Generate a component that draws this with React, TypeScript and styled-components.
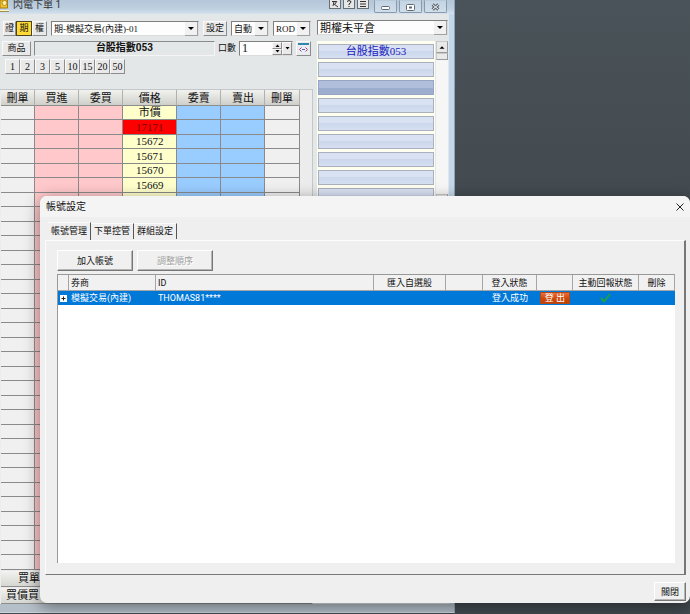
import React from "react";
import styled, { createGlobalStyle, css } from "styled-components";

const ming = `"Liberation Serif", "Noto Sans CJK TC", serif`;
const sans = `Roboto, "Noto Sans CJK TC", sans-serif`;

const Global = createGlobalStyle`
  *, *::before, *::after { box-sizing: border-box; }
  body { margin: 0; background: #434b50; }
  button, input, select { font: inherit; color: inherit; margin: 0; padding: 0; border-radius: 0; }
  table { border-collapse: collapse; }
`;

const Desktop = styled.main`
  position: relative;
  display: grid;
  grid-template-columns: minmax(0, 455fr) minmax(0, 235fr);
  align-items: start;
  min-height: 100vh;
  overflow: hidden;
  background: linear-gradient(#4a5359, #434b50 180px);
  font-family: ${ming};
  font-size: 10px;
  line-height: 12px;
  color: #111;
`;

/* ---------- order window ---------- */

const OrderWindow = styled.section`
  display: flex;
  flex-direction: column;
  background: #c3d8ea;
  border-bottom: 1px solid #c9d2da;
  border-right: 1px solid #8fa3b4;
`;

const TitleBar = styled.header`
  display: flex;
  align-items: flex-start;
  height: 14px;
  padding-right: 7px;
  background: linear-gradient(#b4c6d8, #bfd0e0 9px, #d5e2ee);
`;

const WindowTitle = styled.h1`
  flex: 1;
  margin: 0 0 0 4px;
  color: #333;
  font-family: ${sans};
  font-size: 10px;
  font-weight: 400;
  line-height: 9px;
  white-space: nowrap;
`;

const ToolButtons = styled.div`
  display: flex;
  gap: 2px;
  margin-right: 5px;
`;

const ToolButton = styled.button`
  display: grid;
  place-items: center;
  width: 12px;
  height: 9px;
  background: #e7e7e7;
  border: 1px solid #6a6f74;
  border-top: 0;
`;

const CaptionButtons = styled.div`
  display: flex;
  gap: 2px;
`;

const CaptionButton = styled.button`
  display: grid;
  place-items: center;
  width: 23px;
  height: 13px;
  background: linear-gradient(#c3d4e4, #d0deea);
  border: 1px solid #8899aa;
  border-top-color: #b9cad9;
  border-radius: 0 0 2px 2px;
`;

const WindowBody = styled.div`
  display: grid;
  grid-template-columns: minmax(0, 313fr) minmax(0, 131fr);
  gap: 4px;
  margin-right: 5px;
  padding: 6px 1px 0 0;
  background: #e4e7e8;
`;

const FrameFoot = styled.div`
  height: 8px;
  background: #b4bfc9;
`;

const LeftPane = styled.div`
  display: flex;
  flex-direction: column;
`;

const Row = styled.div<{ $gap: number; $left: number; $top: number }>`
  display: flex;
  align-items: stretch;
  height: 15px;
  gap: ${(p) => p.$gap}px;
  margin-top: ${(p) => p.$top}px;
  padding: 0 2px 0 ${(p) => p.$left}px;
  font-size: 9px;
`;

const raised = css`
  background: #e9e9e9;
  border: 1px solid;
  border-color: #fafafa #8c8c8c #8c8c8c #fafafa;
`;

const PushButton = styled.button<{ $w: number; $on?: boolean; $size?: number }>`
  ${raised}
  flex: none;
  width: ${(p) => p.$w}px;
  font-size: ${(p) => p.$size ?? 9}px;
  line-height: 11px;
  text-align: center;
  white-space: nowrap;
  ${(p) =>
    p.$on &&
    css`
      background: #ffd936;
      border-color: #4d4520;
    `}
`;

const Segments = styled.div`
  display: flex;
`;

const Drop = styled.label<{ $w?: number; $size?: number }>`
  display: grid;
  flex: ${(p) => (p.$w ? "none" : "1")};
  width: ${(p) => (p.$w ? `${p.$w}px` : "auto")};
  min-width: 0;
  height: 15px;
  align-items: center;
  background: #fdfdfd;
  border: 1px solid;
  border-color: #7f7f7f #dcdcdc #dcdcdc #7f7f7f;
  font-size: ${(p) => p.$size ?? 9}px;

  select {
    grid-area: 1 / 1;
    width: 100%;
    height: 13px;
    padding-left: 2px;
    appearance: none;
    background: transparent;
    border: 0;
    line-height: 13px;
  }
  svg {
    grid-area: 1 / 1;
    justify-self: end;
    box-sizing: content-box;
    padding: 3px 0;
    background: #f1f1f1;
    border-right: 1px solid #a0a0a0;
    border-bottom: 1px solid #a0a0a0;
    pointer-events: none;
  }
`;

const ProductName = styled.output`
  flex: 1;
  min-width: 0;
  border: 1px solid;
  border-color: #8a8a8a #f5f5f5 #f5f5f5 #8a8a8a;
  font-family: ${sans};
  font-size: 10px;
  font-weight: 700;
  line-height: 12px;
  text-align: center;
  white-space: nowrap;
`;

const FieldLabel = styled.label`
  line-height: 15px;
  white-space: nowrap;
`;

const Quantity = styled.div`
  display: grid;
  grid-template-columns: 1fr 10px 10px;
  grid-template-rows: 1fr 1fr;
  width: 54px;
  background: #fdfdfd;
  border: 1px solid;
  border-color: #7f7f7f #dcdcdc #dcdcdc #7f7f7f;

  input {
    grid-row: 1 / 3;
    width: 100%;
    min-width: 0;
    padding-left: 2px;
    background: transparent;
    border: 0;
    font-size: 12px;
    line-height: 12px;
  }
`;

const TinyButton = styled.button<{ $tall?: boolean }>`
  ${raised}
  display: grid;
  place-items: center;
  grid-column: ${(p) => (p.$tall ? 3 : 2)};
  grid-row: ${(p) => (p.$tall ? "1 / 3" : "auto")};
  min-height: 0;
`;

const IconButton = styled.button`
  ${raised}
  display: grid;
  place-items: center;
  width: 15px;
`;

const LadderFrame = styled.div`
  margin-top: 15px;
  padding-left: 1px;
  border-top: 1px solid #c3c7c9;
  border-right: 1px solid #c3c7c9;
  background: #ececec;
`;

const Ladder = styled.table`
  width: 96%;
  table-layout: fixed;
  border-collapse: separate;
  border-spacing: 0;
  font-size: 11px;
  line-height: 13px;
  text-align: center;

  th, td { padding: 0; white-space: nowrap; overflow: hidden; }
  th {
    height: 16px;
    font-weight: 400;
    background: linear-gradient(#f2f2f0, #cfcfca);
    border-right: 1px solid #b0b0ac;
    border-bottom: 1px solid #8d8d8d;
    line-height: 14px;
  }
  tbody tr { height: 14px; }
  tbody tr:nth-child(even) { height: 15px; }
`;

type Tone = "plain" | "buy" | "price" | "sell" | "hot";
const tones: Record<Tone, string> = {
  plain: "#f0f0f0",
  buy: "#ffc8ca",
  price: "#ffffcc",
  sell: "#99ccff",
  hot: "#ff0000",
};

const LadderCell = styled.td<{ $tone: Tone }>`
  background: ${(p) => tones[p.$tone]};
  color: ${(p) => (p.$tone === "hot" ? "#7a0000" : "#111")};
  border-right: 1px solid #8a8a8a;
  border-bottom: 1px solid #8a8a8a;
`;

const Summary = styled.div<{ $left: number }>`
  height: 16px;
  margin-top: 1px;
  padding-left: ${(p) => p.$left}px;
  background: linear-gradient(#f2f2f0, #d6d6d2);
  border-bottom: 1px solid #8d8d8d;
  font-size: 11px;
  line-height: 14px;
`;

const RightPane = styled.div`
  display: grid;
  grid-template-columns: minmax(0, 1fr);
  align-content: start;
  gap: 6px;
`;

const PositionArea = styled.div`
  display: grid;
  grid-template-columns: minmax(0, 1fr) 12px;
  gap: 1px;
`;

const PositionList = styled.ul`
  display: grid;
  gap: 3px;
  margin: 0;
  padding: 3px 1px;
  list-style: none;
  background: #fffff0;
`;

const Position = styled.li<{ $on?: boolean }>`
  height: 15px;
  border: 1px solid ${(p) => (p.$on ? "#98a4c4" : "#aab0bd")};
  background: ${(p) =>
    p.$on
      ? "linear-gradient(#b0bedb 50%, #9dadd0 50%)"
      : "linear-gradient(#d9e2f3, #d9e2f3 45%, #ccd7ec 50%, #d6dff1)"};
  color: #1a1ac0;
  font-size: 11px;
  line-height: 13px;
  text-align: center;
`;

const ScrollBar = styled.div`
  display: grid;
  grid-template-rows: 12px 7px 1fr 12px;
  background: #f6f6f6;
`;

const ScrollPart = styled.button`
  ${raised}
  border-color: #c8c8c8 #9a9a9a #9a9a9a #c8c8c8;
  display: grid;
  place-items: center;
`;

/* ---------- account dialog ---------- */

const Dialog = styled.section`
  position: absolute;
  top: 196px;
  right: 0;
  bottom: 11px;
  left: 40px;
  display: flex;
  flex-direction: column;
  background: #efefef;
  border-radius: 7px;
  box-shadow: 0 4px 16px rgba(0, 0, 0, 0.45);
  font-family: ${sans};
  font-size: 9px;
`;

const DialogTitle = styled.header`
  display: flex;
  align-items: center;
  justify-content: space-between;
  height: 21px;
  padding: 0 6px;
  background: #f4f4f4;
  border-radius: 7px 7px 0 0;

  h2 { margin: 0; font-size: 10px; font-weight: 400; line-height: 14px; }
`;

const BareButton = styled.button`
  display: grid;
  place-items: center;
  background: none;
  border: 0;
`;

const TreeButton = styled(BareButton)`
  margin: 0 auto;
`;

const Tabs = styled.div`
  display: flex;
  align-items: flex-end;
  height: 23px;
  padding-left: 8px;
`;

const Tab = styled.button<{ $active?: boolean }>`
  height: ${(p) => (p.$active ? 18 : 16)}px;
  padding: 0 3px ${(p) => (p.$active ? 2 : 1)}px;
  margin-bottom: ${(p) => (p.$active ? 0 : 1)}px;
  background: none;
  border: 0;
  border-top: 1px solid #fbfbfb;
  border-right: 1px solid #555;
  line-height: 12px;
  white-space: nowrap;
`;

const TabPanel = styled.div`
  display: flex;
  flex: 1;
  flex-direction: column;
  min-height: 0;
  margin: 0 4px 0 5px;
  padding: 9px 9px 11px 11px;
  border: 1px solid;
  border-color: #fcfcfc #777 #777 #fcfcfc;
  border-right-width: 2px;
`;

const Actions = styled.div`
  display: flex;
  gap: 4px;
`;

const ActionButton = styled.button<{ $w: number }>`
  width: ${(p) => p.$w}px;
  height: ${(p) => (p.$w > 50 ? 21 : 19)}px;
  background: #f0f0f0;
  border: 1px solid;
  border-color: #fff #777 #777 #fff;
  box-shadow: inset -1px -1px #b5b5b5;
  line-height: 12px;

  &:disabled { color: #a0a0a0; text-shadow: 1px 1px #fff; }
`;

const GridArea = styled.div`
  flex: 1;
  margin-top: 3px;
  min-height: 0;
  background: #fff;
  border-left: 1px solid #999;
  border-top: 1px solid #999;
`;

const Accounts = styled.table`
  width: 100%;
  table-layout: fixed;
  border-collapse: separate;
  border-spacing: 0;
  line-height: 12px;
  text-align: center;

  th, td { padding: 0; white-space: nowrap; }
  th {
    height: 16px;
    background: #f1f1f1;
    border-right: 1px solid #a5a5a5;
    border-bottom: 1px solid #a5a5a5;
    font-weight: 400;
  }
  td { height: 14px; background: #0078d7; color: #fff; }
`;

const HeadCell = styled.th<{ $left?: boolean }>`
  && { padding-left: ${(p) => (p.$left ? 2 : 0)}px; }
  text-align: ${(p) => (p.$left ? "left" : "center")};
`;

const BodyCell = styled.td<{ $left?: boolean }>`
  && { padding-left: ${(p) => (p.$left ? 2 : 0)}px; }
  text-align: ${(p) => (p.$left ? "left" : "center")};

  svg { display: block; margin: 0 auto; }
`;

const Logout = styled.button`
  display: block;
  width: 30px;
  height: 12px;
  margin: 0 auto;
  background: linear-gradient(#e8703a, #cf4a0c 50%, #c23f04);
  border: 1px solid #b04a1c;
  color: #fff;
  line-height: 10px;
  white-space: nowrap;
`;

const DialogFoot = styled.footer`
  display: flex;
  justify-content: flex-end;
  padding: 7px 4px 2px;
`;

/* ---------- drawings ---------- */

const Arrow = ({ w = 12, up = false, s = 5 }: { w?: number; up?: boolean; s?: number }) => (
  <svg width={w} height={s > 3 ? 7 : 3} viewBox={s > 3 ? "0 0 12 7" : "0 0 5 3"} aria-hidden="true">
    {s > 3 ? (
      <path d={up ? "M3 5h6L6 2z" : "M3 2h6L6 5z"} fill="#000" />
    ) : (
      <path d={up ? "M.5 3h4L2.500 .5z" : "M.5 0h4L2.500 2.500z"} fill="#000" />
    )}
  </svg>
);

const AppIcon = () => (
  <svg width="9" height="12" viewBox="0 0 9 12" aria-hidden="true">
    <path d="M0 0h7.500v8H0z" fill="#f2c230" stroke="#a57c10" />
    <circle cx="4.500" cy="3" r="2.500" fill="#fff1a8" stroke="#b58a18" />
    <path d="M0 10.500h9" stroke="#fff3c0" />
    <path d="M0 11.500h9" stroke="#a08d50" />
  </svg>
);

const Dropdown = ({ label, value, w, size }: { label: string; value: string; w?: number; size?: number }) => (
  <Drop $w={w} $size={size}>
    <select aria-label={label} defaultValue={value}>
      <option>{value}</option>
    </select>
    <Arrow />
  </Drop>
);

const ladderTones: Tone[] = ["plain", "buy", "buy", "price", "sell", "sell", "plain"];
const ladderHeads = ["刪單", "買進", "委買", "價格", "委賣", "賣出", "刪單"];
const ladderWidths = [34, 44, 44, 54, 44, 44, 34];
const prices = ["市價", "17171", "15672", "15671", "15670", "15669", "15668"];
const ladderRows = Array.from({ length: 32 }, (_, i) => prices[i] ?? "");

const accountHeads = ["", "券商", "ID", "匯入自選股", "", "登入狀態", "", "主動回報狀態", "刪除"];
const accountWidths = [11, 87, 218, 72, 37, 54, 36, 66, 36];

export default function App() {
  return (
    <>
      <Global />
      <Desktop lang="zh-Hant">
        <OrderWindow>
          <TitleBar>
            <AppIcon />
            <WindowTitle>閃電下單 1</WindowTitle>
            <ToolButtons>
              <ToolButton aria-label="釘選">
                <svg width="8" height="8" viewBox="0 0 8 8"><path d="M1 1.500h4M3 1.500L2 6M3 4l4 3M6 1L4 4" stroke="#333" fill="none" /></svg>
              </ToolButton>
              <ToolButton aria-label="說明">
                <svg width="8" height="8" viewBox="0 0 8 8"><path d="M2 1.500Q4-.5 6 1.500 6 3 4 4v1M4 6v1" stroke="#222" fill="none" /></svg>
              </ToolButton>
              <ToolButton aria-label="選單">
                <svg width="8" height="8" viewBox="0 0 8 8"><path d="M1 1.500h6M1 4h6M1 6.500h6" stroke="#333" /></svg>
              </ToolButton>
            </ToolButtons>
            <CaptionButtons>
              <CaptionButton aria-label="最小化">
                <svg width="9" height="8" viewBox="0 0 9 8"><rect x=".5" y="3.500" width="8" height="3" rx="1" fill="#fff" stroke="#5d6873" /></svg>
              </CaptionButton>
              <CaptionButton aria-label="最大化">
                <svg width="9" height="8" viewBox="0 0 9 8"><rect x=".5" y="1.500" width="8" height="6" rx="1" fill="#fff" stroke="#5d6873" /><path d="M3 4.500h3" stroke="#5d6873" strokeWidth="2" /></svg>
              </CaptionButton>
              <CaptionButton aria-label="關閉視窗">
                <svg width="9" height="8" viewBox="0 0 9 8"><path d="M1.500 1.500l6 5M7.500 1.500l-6 5" stroke="#5d6873" strokeWidth="3" /><path d="M1.500 1.500l6 5M7.500 1.500l-6 5" stroke="#fff" /></svg>
              </CaptionButton>
            </CaptionButtons>
          </TitleBar>

          <WindowBody>
            <LeftPane>
              <Row $gap={4} $left={3} $top={1}>
                <Segments>
                  <PushButton $w={13}>證</PushButton>
                  <PushButton $w={16} $on>期</PushButton>
                  <PushButton $w={15}>權</PushButton>
                </Segments>
                <Dropdown label="帳號" value="期-模擬交易(內建)-01" />
                <PushButton $w={24}>設定</PushButton>
                <Dropdown label="倉別" value="自動" w={38} />
                <Dropdown label="委託條件" value="ROD" w={38} />
              </Row>
              <Row $gap={3} $left={2} $top={5}>
                <PushButton $w={29}>商品</PushButton>
                <ProductName>台股指數053</ProductName>
                <FieldLabel htmlFor="qty">口數</FieldLabel>
                <Quantity>
                  <input id="qty" type="text" defaultValue="1" />
                  <TinyButton aria-label="增加"><Arrow w={5} s={3} up /></TinyButton>
                  <TinyButton aria-label="減少"><Arrow w={5} s={3} /></TinyButton>
                  <TinyButton $tall aria-label="選擇口數"><Arrow w={5} s={3} /></TinyButton>
                </Quantity>
                <IconButton aria-label="調整寬度">
                  <svg width="11" height="11" viewBox="0 0 11 11">
                    <path d="M0 0h11v11H0z" fill="#e8eef8" />
                    <path d="M0 1h11" stroke="#2f88a8" strokeWidth="2" />
                    <path d="M3.500 4.500l-2 2 2 2M7.500 4.500l2 2-2 2" stroke="#c03a4a" fill="none" />
                    <path d="M4 6.500h3" stroke="#4a6ac0" />
                  </svg>
                </IconButton>
              </Row>
              <Row $gap={0} $left={5} $top={3}>
                {[1, 2, 3, 5, 10, 15, 20, 50].map((n) => (
                  <PushButton key={n} $w={15} $size={10}>{n}</PushButton>
                ))}
              </Row>
              <LadderFrame>
                <Ladder>
                  <colgroup>
                    {ladderWidths.map((w, i) => (
                      <col key={i} style={{ width: `${(w / 298) * 100}%` }} />
                    ))}
                  </colgroup>
                  <thead>
                    <tr>{ladderHeads.map((h, i) => <th key={i}>{h}</th>)}</tr>
                  </thead>
                  <tbody>
                    {ladderRows.map((price, r) => (
                      <tr key={r}>
                        {ladderTones.map((tone, c) => (
                          <LadderCell key={c} $tone={c === 3 && r === 1 ? "hot" : tone}>
                            {c === 3 ? price : ""}
                          </LadderCell>
                        ))}
                      </tr>
                    ))}
                  </tbody>
                </Ladder>
                <Summary $left={17}>買單</Summary>
                <Summary $left={5}>買價買</Summary>
              </LadderFrame>
            </LeftPane>

            <RightPane>
              <Dropdown label="部位類別" value="期權未平倉" size={11} />
              <PositionArea>
                <PositionList>
                  {Array.from({ length: 9 }, (_, i) => (
                    <Position key={i} $on={i === 2}>{i === 0 ? "台股指數053" : ""}</Position>
                  ))}
                </PositionList>
                <ScrollBar>
                  <ScrollPart aria-label="向上捲動"><Arrow w={10} up /></ScrollPart>
                  <ScrollPart aria-label="捲軸" />
                  <span />
                  <ScrollPart aria-label="向下捲動"><Arrow w={10} /></ScrollPart>
                </ScrollBar>
              </PositionArea>
            </RightPane>
          </WindowBody>
          <FrameFoot />
        </OrderWindow>

        <Dialog role="dialog" aria-labelledby="dialog-title">
          <DialogTitle>
            <h2 id="dialog-title">帳號設定</h2>
            <BareButton aria-label="關閉對話框">
              <svg width="8" height="8" viewBox="0 0 8 8"><path d="M.5.5l7 7M7.500.5l-7 7" stroke="#222" /></svg>
            </BareButton>
          </DialogTitle>
          <Tabs role="tablist">
            <Tab role="tab" aria-selected="true" $active>帳號管理</Tab>
            <Tab role="tab" aria-selected="false">下單控管</Tab>
            <Tab role="tab" aria-selected="false">群組設定</Tab>
          </Tabs>
          <TabPanel role="tabpanel">
            <Actions>
              <ActionButton $w={76}>加入帳號</ActionButton>
              <ActionButton $w={76} disabled>調整順序</ActionButton>
            </Actions>
            <GridArea>
              <Accounts>
                <colgroup>
                  {accountWidths.map((w, i) => (
                    <col key={i} style={{ width: `${(w / 617) * 100}%` }} />
                  ))}
                </colgroup>
                <thead>
                  <tr>
                    {accountHeads.map((h, i) => (
                      <HeadCell key={i} $left={i === 1 || i === 2}>{h}</HeadCell>
                    ))}
                  </tr>
                </thead>
                <tbody>
                  <tr>
                    <BodyCell>
                      <TreeButton aria-label="展開">
                        <svg width="7" height="7" viewBox="0 0 7 7"><path d="M0 0h7v7H0z" fill="#fff" /><path d="M1.500 3.500h4M3.500 1.500v4" stroke="#222" /></svg>
                      </TreeButton>
                    </BodyCell>
                    <BodyCell $left>模擬交易(內建)</BodyCell>
                    <BodyCell $left>THOMAS81****</BodyCell>
                    <BodyCell />
                    <BodyCell />
                    <BodyCell>登入成功</BodyCell>
                    <BodyCell><Logout>登 出</Logout></BodyCell>
                    <BodyCell>
                      <svg width="11" height="10" viewBox="0 0 11 10" role="img" aria-label="已啟用">
                        <path d="M1 5l3 3.500L10 1" stroke="#22a045" strokeWidth="2" fill="none" />
                      </svg>
                    </BodyCell>
                    <BodyCell />
                  </tr>
                </tbody>
              </Accounts>
            </GridArea>
          </TabPanel>
          <DialogFoot>
            <ActionButton $w={32}>關閉</ActionButton>
          </DialogFoot>
        </Dialog>
      </Desktop>
    </>
  );
}
